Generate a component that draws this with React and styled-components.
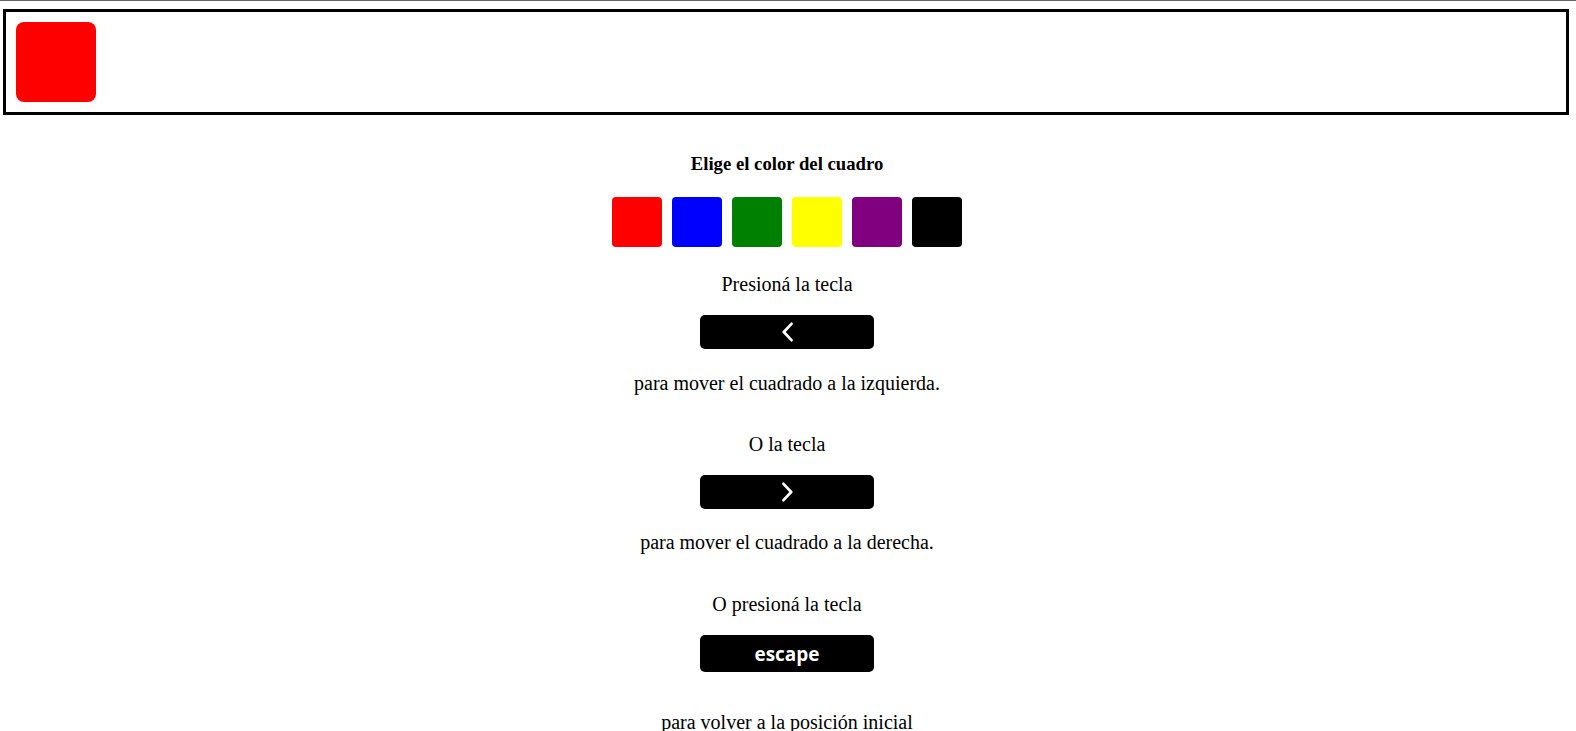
import React, { useEffect, useState } from "react";
import styled, { createGlobalStyle } from "styled-components";

const GlobalStyle = createGlobalStyle`
  body {
    margin: 0;
    background: #fff;
    font-family: "Liberation Serif", "Times New Roman", serif;
    color: #000;
  }
`;

// thin grey rule at the very top of the page
const TopLine = styled.div`
  height: 1px;
  background-color: #666;
`;

const Board = styled.div`
  display: flex;
  margin: 8px 7px 0 3px;
  padding: 10px;
  border: 3px solid #000;
`;

const Square = styled.div`
  width: 80px;
  height: 80px;
  border-radius: 8px;
  background-color: ${(p) => p.$color};
`;

const Panel = styled.div`
  display: flex;
  flex-direction: column;
  align-items: center;
  padding-right: 2px;
`;

const Title = styled.h3`
  margin: 38px 0 0;
  font-size: 18.72px;
  line-height: 21px;
  font-weight: 700;
`;

const Swatches = styled.div`
  display: flex;
  gap: 10px;
  margin-top: 23px;
`;

const Swatch = styled.button`
  width: 50px;
  height: 50px;
  padding: 0;
  border: none;
  border-radius: 4px;
  background-color: ${(p) => p.$color};
  cursor: pointer;
`;

const Text = styled.p`
  margin: ${(p) => p.$top}px 0 0;
  font-size: 20px;
  line-height: 22px;
`;

const Key = styled.div`
  display: flex;
  align-items: center;
  justify-content: center;
  width: 174px;
  height: ${(p) => p.$height || 34}px;
  margin-top: ${(p) => p.$top}px;
  border-radius: 5px;
  background-color: #000;
  color: #fff;
  font-family: "Open Sans", "DejaVu Sans", sans-serif;
  font-size: 19px;
  font-weight: 700;
`;

const Chevron = ({ dir }) => (
  <svg width="13" height="20" viewBox="0 0 13 20" fill="none">
    <polyline
      points={dir === "left" ? "10.5,1.8 2.8,10 10.5,18.2" : "2.5,1.8 10.2,10 2.5,18.2"}
      stroke="#fff"
      strokeWidth="2.7"
      strokeLinecap="round"
      strokeLinejoin="round"
    />
  </svg>
);

const colors = ["red", "blue", "green", "yellow", "purple", "black"];

const App = () => {
  const [color, setColor] = useState("red");
  const [offset, setOffset] = useState(0);

  useEffect(() => {
    const onKey = (e) => {
      if (e.key === "ArrowLeft") setOffset((o) => Math.max(0, o - 20));
      if (e.key === "ArrowRight") setOffset((o) => o + 20);
      if (e.key === "Escape") setOffset(0);
    };
    window.addEventListener("keydown", onKey);
    return () => window.removeEventListener("keydown", onKey);
  }, []);

  return (
    <>
      <GlobalStyle />
      <TopLine />
      <Board>
        <Square $color={color} style={{ marginLeft: offset }} />
      </Board>
      <Panel>
        <Title>Elige el color del cuadro</Title>
        <Swatches>
          {colors.map((c) => (
            <Swatch key={c} $color={c} onClick={() => setColor(c)} aria-label={c} />
          ))}
        </Swatches>

        <Text $top={26}>Presioná la tecla</Text>
        <Key $top={20}>
          <Chevron dir="left" />
        </Key>
        <Text $top={23}>para mover el cuadrado a la izquierda.</Text>

        <Text $top={39}>O la tecla</Text>
        <Key $top={20}>
          <Chevron dir="right" />
        </Key>
        <Text $top={22}>para mover el cuadrado a la derecha.</Text>

        <Text $top={40}>O presioná la tecla</Text>
        <Key $top={20} $height={37}>
          escape
        </Key>
        <Text $top={39}>para volver a la posición inicial</Text>
      </Panel>
    </>
  );
};

export default App;
